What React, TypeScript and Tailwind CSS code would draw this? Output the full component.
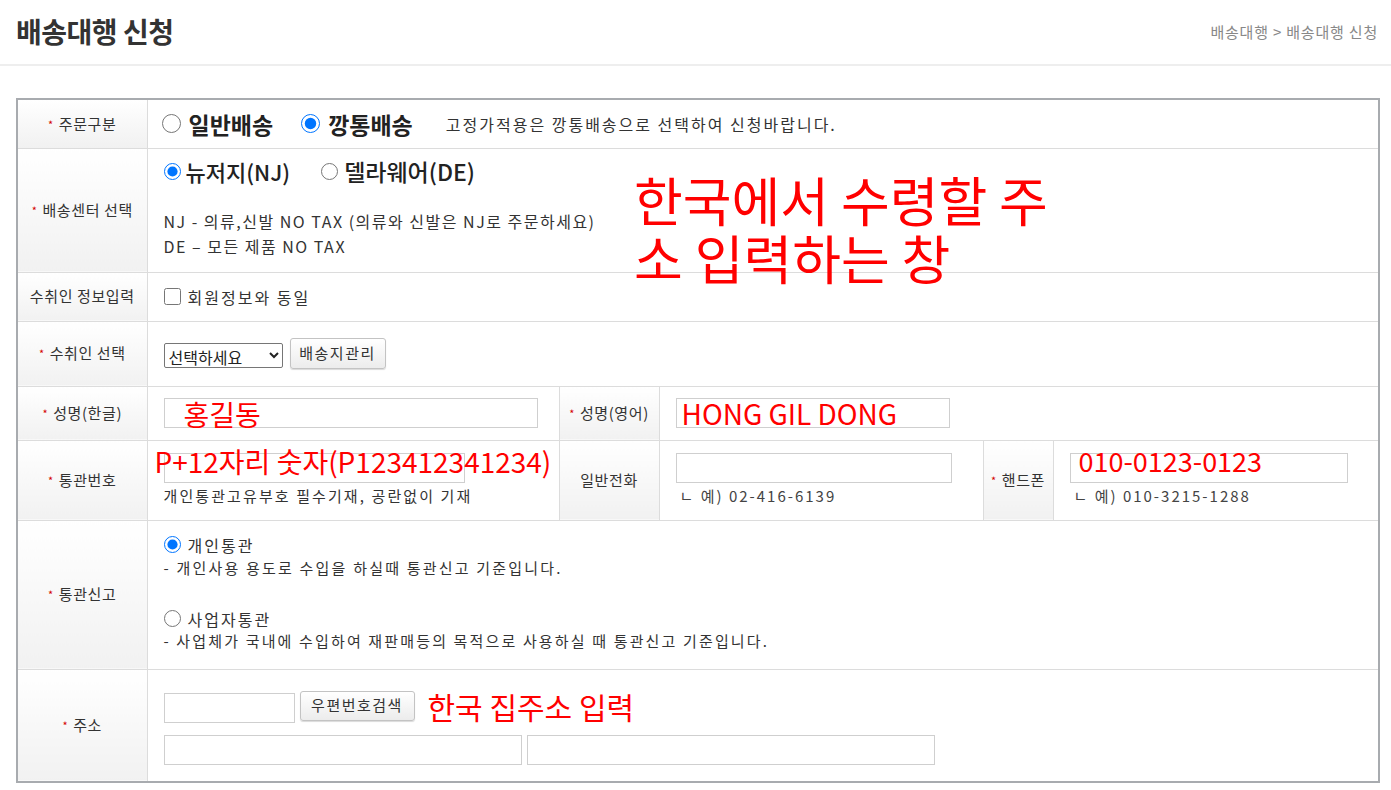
import React from "react";

const Star = () => <span className="text-[#d40000] text-[11px] mr-[5px] relative top-[-1px]">*</span>;

const Label = ({ children, star = true, className = "" }: { children: React.ReactNode; star?: boolean; className?: string }) => (
  <td className={"border border-[#dcdcdc] bg-gradient-to-b from-white to-[#f1f1f1] text-center align-middle text-[15px] tracking-[0.6px] text-[#333] " + className}>
    {star && <Star />}
    {children}
  </td>
);

const Input = ({ w, className = "" }: { w: string; className?: string }) => (
  <input type="text" className={"h-[30px] border border-[#cfcfcf] bg-white outline-none " + w + " " + className} />
);

const red = "text-[#ff0000] absolute whitespace-nowrap leading-none pointer-events-none";

export default function App() {
  return (
    <div className="w-[1391px] min-h-[790px] bg-white text-[#333] relative" style={{ fontFamily: '"Noto Sans CJK KR", "Noto Sans", sans-serif' }}>
      <div className="h-[66px] border-b-2 border-[#eeeeee] flex items-center justify-between pl-4 pr-[13px]">
        <h1 className="text-[28px] font-semibold text-[#333] tracking-[-0.5px] mt-[-2px]">배송대행 신청</h1>
        <div className="text-[15px] text-[#888] tracking-[0.8px]">배송대행 &gt; 배송대행 신청</div>
      </div>

      <div className="pl-4 pt-8 relative">
        <table className="table-fixed border-collapse w-[1362px] border-2 border-[#a8abaf]">
          <colgroup>
            <col className="w-[130px]" />
            <col className="w-[412px]" />
            <col className="w-[100px]" />
            <col className="w-[324px]" />
            <col className="w-[70px]" />
            <col className="w-[326px]" />
          </colgroup>
          <tbody>
            <tr className="h-[49px]">
              <Label>주문구분</Label>
              <td colSpan={5} className="border border-[#dcdcdc] pl-[14px] align-middle">
                <div className="flex items-center">
                  <input type="radio" name="o" className="w-[19px] h-[19px] m-0" />
                  <span className="ml-[8px] text-[23px] font-bold text-[#222]">일반배송</span>
                  <input type="radio" name="o" defaultChecked className="w-[19px] h-[19px] m-0 ml-[28px]" />
                  <span className="ml-[8px] text-[23px] font-bold text-[#222]">깡통배송</span>
                  <span className="ml-[33px] text-[16px] tracking-[2px] text-[#333]">고정가적용은 깡통배송으로 선택하여 신청바랍니다.</span>
                </div>
              </td>
            </tr>
            <tr className="h-[124px]">
              <Label>배송센터 선택</Label>
              <td colSpan={5} className="border border-[#dcdcdc] pl-[16px] align-top">
                <div className="flex items-center mt-[8px] h-[30px]">
                  <input type="radio" name="c" defaultChecked className="w-[17px] h-[17px] m-0" />
                  <span className="ml-[5px] text-[22px] font-medium text-[#222]">뉴저지(NJ)</span>
                  <input type="radio" name="c" className="w-[17px] h-[17px] m-0 ml-[31px]" />
                  <span className="ml-[6px] text-[23px] font-medium text-[#222]">델라웨어(DE)</span>
                </div>
                <div className="mt-[22px] text-[16px] leading-[25px] text-[#333] tracking-[1.5px]">
                  <div>NJ - 의류,신발 NO TAX (의류와 신발은 NJ로 주문하세요)</div>
                  <div>DE – 모든 제품 NO TAX</div>
                </div>
              </td>
            </tr>
            <tr className="h-[49px]">
              <Label star={false}>수취인 정보입력</Label>
              <td colSpan={5} className="border border-[#dcdcdc] pl-[16px] align-middle">
                <div className="flex items-center">
                  <input type="checkbox" className="w-[17px] h-[17px] m-0" />
                  <span className="ml-[7px] text-[16px] tracking-[2px] text-[#333]">회원정보와 동일</span>
                </div>
              </td>
            </tr>
            <tr className="h-[65px]">
              <Label>수취인 선택</Label>
              <td colSpan={5} className="border border-[#dcdcdc] pl-[16px] align-middle">
                <div className="flex items-start">
                  <select className="w-[119px] h-[25px] mt-[5px] border border-[#767676] rounded-[2px] text-[16px] text-[#222] bg-white">
                    <option>선택하세요</option>
                  </select>
                  <button className="ml-[7px] w-[96px] h-[31px] border border-[#c3c3c3] rounded-[3px] bg-gradient-to-b from-white to-[#ececec] shadow-[0_1px_1px_rgba(0,0,0,0.15)] text-[15px] tracking-[1.5px] text-[#333]">배송지관리</button>
                </div>
              </td>
            </tr>
            <tr className="h-[54px]">
              <Label>성명(한글)</Label>
              <td className="border border-[#dcdcdc] pl-[16px] align-middle relative">
                <Input w="w-[374px]" />
                <span className={red + " text-[28px] left-[36px] top-[13px]"}>홍길동</span>
              </td>
              <Label>성명(영어)</Label>
              <td colSpan={3} className="border border-[#dcdcdc] pl-[16px] align-middle relative">
                <Input w="w-[274px]" />
                <span className={red + " text-[28px] left-[22px] top-[12px]"}>HONG GIL DONG</span>
              </td>
            </tr>
            <tr className="h-[80px]">
              <Label>통관번호</Label>
              <td className="border border-[#dcdcdc] pl-[16px] align-top relative">
                <Input w="w-[301px]" className="mt-[12px] block" />
                <div className="text-[15px] tracking-[2.1px] text-[#333] mt-[2px]">개인통관고유부호 필수기재, 공란없이 기재</div>
                <span className={red + " text-[28px] left-[7px] top-[6px]"}>P+12자리 숫자(P123412341234)</span>
              </td>
              <Label star={false}>일반전화</Label>
              <td className="border border-[#dcdcdc] pl-[16px] align-top">
                <Input w="w-[276px]" className="mt-[12px] block" />
                <div className="text-[15px] tracking-[2px] text-[#444] mt-[2px] ml-[4px]">ㄴ 예) 02-416-6139</div>
              </td>
              <Label>핸드폰</Label>
              <td className="border border-[#dcdcdc] pl-[16px] align-top relative">
                <Input w="w-[278px]" className="mt-[12px] block" />
                <div className="text-[15px] tracking-[2px] text-[#444] mt-[2px] ml-[4px]">ㄴ 예) 010-3215-1288</div>
                <span className={red + " text-[27px] left-[25px] top-[6px]"}>010-0123-0123</span>
              </td>
            </tr>
            <tr className="h-[149px]">
              <Label>통관신고</Label>
              <td colSpan={5} className="border border-[#dcdcdc] pl-[16px] align-top">
                <div className="flex items-center mt-[14px] h-[20px]">
                  <input type="radio" name="t" defaultChecked className="w-[17px] h-[17px] m-0" />
                  <span className="ml-[7px] text-[16px] tracking-[2px] text-[#333]">개인통관</span>
                </div>
                <div className="text-[15px] tracking-[2.2px] text-[#333] leading-[22px] mt-[2px]">- 개인사용 용도로 수입을 하실때 통관신고 기준입니다.</div>
                <div className="flex items-center mt-[30px] h-[20px]">
                  <input type="radio" name="t" className="w-[17px] h-[17px] m-0" />
                  <span className="ml-[7px] text-[16px] tracking-[2px] text-[#333]">사업자통관</span>
                </div>
                <div className="text-[15px] tracking-[2.15px] text-[#333] leading-[22px] mt-[1px]">- 사업체가 국내에 수입하여 재판매등의 목적으로 사용하실 때 통관신고 기준입니다.</div>
              </td>
            </tr>
            <tr className="h-[113px]">
              <Label>주소</Label>
              <td colSpan={5} className="border border-[#dcdcdc] pl-[16px] align-top">
                <div className="flex items-start mt-[21px]">
                  <Input w="w-[131px]" className="mt-[2px]" />
                  <button className="ml-[5px] w-[115px] h-[30px] border border-[#c3c3c3] rounded-[3px] bg-gradient-to-b from-white to-[#ececec] shadow-[0_1px_1px_rgba(0,0,0,0.15)] text-[15px] text-[#333] tracking-[1.5px]">우편번호검색</button>
                  <span className="ml-[13px] text-[30px] leading-[30px] text-[#ff0000]">한국 집주소 입력</span>
                </div>
                <div className="flex mt-[12px] gap-[5px]">
                  <Input w="w-[358px]" />
                  <Input w="w-[408px]" />
                </div>
              </td>
            </tr>
          </tbody>
        </table>
        <div className="absolute left-[634px] top-[104px] text-[#ff0000] text-[53px] leading-[58px] whitespace-nowrap pointer-events-none">
          한국에서 수령할 주<br />소 입력하는 창
        </div>
      </div>
    </div>
  );
}
